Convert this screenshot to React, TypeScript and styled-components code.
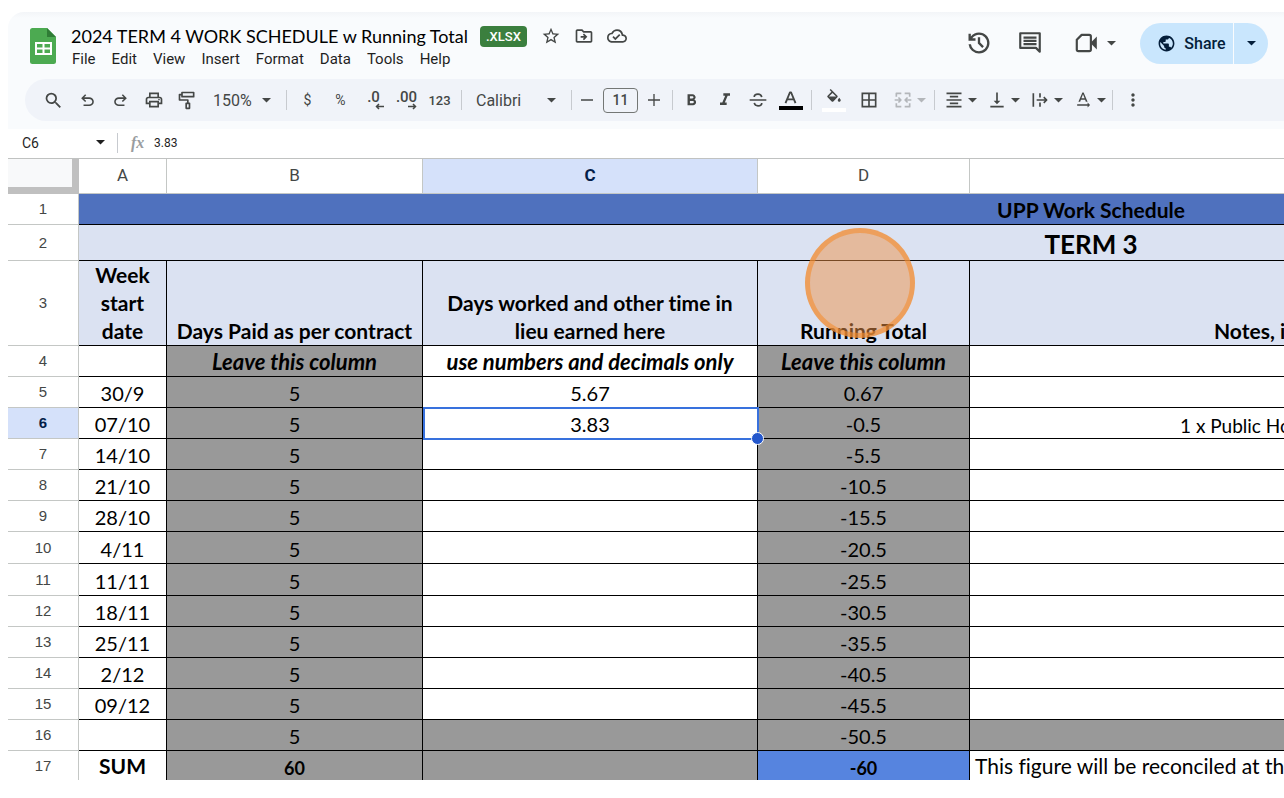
import React from "react";
import styled, { createGlobalStyle, css } from "styled-components";
import {
  MdBorderAll,
  MdFormatAlignCenter,
  MdFormatBold,
  MdFormatItalic,
  MdMoreVert,
  MdOutlineCloudDone,
  MdOutlineDriveFileMove,
  MdOutlineLocalPrintshop,
  MdPublic,
  MdSearch,
  MdStarBorder,
  MdTextRotationNone,
  MdVerticalAlignBottom,
} from "react-icons/md";

const UI_FONT = `Roboto, "Liberation Sans", sans-serif`;
const CELL_FONT = `Lato, "Liberation Sans", sans-serif`;
const INK = "#444746";

const GlobalStyle = createGlobalStyle`
  * { box-sizing: border-box; }
  body { margin: 0; background: #fff; overflow: hidden; font-family: ${UI_FONT}; }
  button, input, select { font: inherit; color: inherit; border: 0; padding: 0; margin: 0; background: none; outline: none; }
  button { cursor: pointer; }
  svg { display: block; flex: none; }
`;

const AppWindow = styled.main`
  position: relative;
  margin: 12px 0 0 8px;
  border-radius: 16px 0 0 16px;
  overflow: hidden;
  background: #fff;
`;

const Header = styled.header`
  background: linear-gradient(#f3f5f8, #f9fbfd 6px);
  padding-bottom: 8px;
`;

const TopRow = styled.div`
  display: flex;
  align-items: center;
  height: 67px;
  padding: 0 16px 0 22px;
`;

const DocInfo = styled.div`
  display: flex;
  flex-direction: column;
  gap: 1px;
  margin-left: 15px;
  padding-top: 2px;
`;

const TitleRow = styled.div`
  display: flex;
  align-items: center;
  height: 24px;
  color: ${INK};
`;

const DocTitle = styled.h1`
  margin: 0;
  font-family: ${CELL_FONT};
  font-size: 18px;
  line-height: 24px;
  font-weight: 400;
  color: #000;
  white-space: nowrap;
`;

const FormatBadge = styled.span`
  margin: 0 8px 0 12px;
  padding: 0 6px;
  border-radius: 4px;
  background: #3b7f3e;
  color: #fff;
  font-size: 13px;
  font-weight: 500;
  line-height: 21px;
`;

const TitleIcon = styled.button`
  display: flex;
  align-items: center;
  justify-content: center;
  width: 33px;
  height: 24px;
  font-size: 20px;
`;

const MenuBar = styled.nav`
  display: flex;
  gap: 16px;
  margin-left: 1px;
`;

const MenuItem = styled.button`
  font-size: 15px;
  line-height: 20px;
  color: #1f1f1f;
`;

const Actions = styled.div`
  display: flex;
  align-self: flex-start;
  align-items: center;
  height: 62px;
  margin-left: auto;
  color: ${INK};
`;

const ActionButton = styled.button<{ $w?: number; $gap?: number }>`
  display: flex;
  align-items: center;
  justify-content: center;
  gap: 8px;
  width: ${(p) => p.$w ?? 24}px;
  height: 40px;
  margin-right: ${(p) => p.$gap ?? 27}px;
`;

const SharePill = styled.div`
  display: flex;
  gap: 1px;
  height: 41px;
  border-radius: 21px;
  overflow: hidden;
  color: #041e3a;
`;

const ShareButton = styled.button<{ $caret?: boolean }>`
  display: flex;
  align-items: center;
  justify-content: center;
  gap: 8px;
  width: ${(p) => (p.$caret ? "34px" : "93px")};
  padding-left: ${(p) => (p.$caret ? "0" : "10px")};
  background: #c9e6fd;
  font-size: 16px;
  font-weight: 500;
`;

const Toolbar = styled.div`
  display: flex;
  align-items: center;
  height: 42px;
  margin-left: 17px;
  padding-left: 11px;
  border-radius: 21px 0 0 21px;
  background: #f0f3f9;
  color: ${INK};
  white-space: nowrap;
`;

const Tool = styled.button<{ $w?: number; $muted?: boolean; $strong?: boolean }>`
  display: flex;
  align-items: center;
  justify-content: center;
  gap: 4px;
  flex: none;
  width: ${(p) => p.$w ?? 33}px;
  height: 32px;
  font-size: ${(p) => (p.$strong ? "13px" : "14px")};
  font-weight: ${(p) => (p.$strong ? 500 : 400)};
  color: ${(p) => (p.$muted ? "#b3b6ba" : "inherit")};
`;

const DecimalTool = styled(Tool)`
  flex-direction: column;
  gap: 0;
  font-weight: 500;
  font-size: 15px;
  line-height: 14px;
  svg { margin: -1px 0 0 11px; }
`;

const ColorTool = styled(Tool)<{ $bar: string }>`
  flex-direction: column;
  gap: 1px;
  &::after {
    content: "";
    width: 24px;
    height: 4px;
    background: ${(p) => p.$bar};
  }
`;

const Separator = styled.span<{ $before?: number; $after?: number }>`
  flex: none;
  width: 1px;
  height: 20px;
  margin: 0 ${(p) => p.$after ?? 4}px 0 ${(p) => p.$before ?? 4}px;
  background: #c7cacf;
`;

const Dropdown = styled.label<{ $w: number }>`
  position: relative;
  flex: none;
  width: ${(p) => p.$w}px;
  select {
    width: 100%;
    height: 32px;
    padding-left: 10px;
    appearance: none;
    font-size: 16px;
  }
  svg {
    position: absolute;
    right: 11px;
    top: 14px;
    pointer-events: none;
  }
`;

const Stepper = styled.div`
  display: flex;
  align-items: center;
  gap: 5px;
  padding-right: 3px;
`;

const SizeInput = styled.input`
  width: 35px;
  height: 25px;
  border: 1px solid #747775;
  border-radius: 4px;
  text-align: center;
  font-size: 14px;
  font-weight: 500;
`;

const FormulaBar = styled.div`
  display: flex;
  align-items: center;
  height: 29px;
  padding: 0 0 2px 14px;
  color: #1f1f1f;
`;

const NameBox = styled.input`
  width: 74px;
  font-size: 14px;
`;

const FormulaInput = styled.input`
  flex: 1;
  min-width: 0;
  font-size: 12px;
`;

const FxMark = styled.span`
  width: 23px;
  font: italic 700 16px/20px "Liberation Serif", serif;
  color: #9a9d9f;
`;

const SheetViewport = styled.div`
  overflow: hidden;
  border-top: 1px solid #c0c2c1;
`;

const Sheet = styled.table`
  table-layout: fixed;
  width: 2096px;
  border-collapse: separate;
  border-spacing: 0;
  font-family: ${CELL_FONT};
  font-variant-ligatures: none;
  color: #000;
  tbody tr:last-child > * { border-bottom: 0; }
`;

const Corner = styled.td`
  padding: 0;
  background: #f8f9fa;
  border-right: 7px solid #c0c0c0;
  border-bottom: 7px solid #c0c0c0;
`;

const headerCell = css<{ $active?: boolean }>`
  border-right: 1px solid #c4c7c5;
  border-bottom: 1px solid #c4c7c5;
  font-weight: ${(p) => (p.$active ? 700 : 400)};
  color: ${(p) => (p.$active ? "#041e49" : INK)};
  background: ${(p) => (p.$active ? "#d5e1fa" : "#fff")};
`;

const ColumnHead = styled.th<{ $active?: boolean }>`
  ${headerCell}
  height: 35px;
  padding: 0 0 3px;
  font-family: ${UI_FONT};
  font-size: 17px;
  line-height: 20px;
`;

const RowHead = styled.th<{ $active?: boolean }>`
  ${headerCell}
  padding: 0;
  font-family: "Liberation Sans", Arial, sans-serif;
  font-size: 15px;
  line-height: 18px;
`;

type Fill = "white" | "title" | "pale" | "grey" | "blue";
const fills: Record<Fill, string> = {
  white: "#fff",
  title: "#4f71be",
  pale: "#dbe2f2",
  grey: "#999999",
  blue: "#5684df",
};

const lineHeightFor = (size = 20) => (size < 20 ? 24 : size > 24 ? 32 : 28);

const Cell = styled.td<{
  $fill?: Fill;
  $bold?: boolean;
  $italic?: boolean;
  $size?: number;
  $indent?: number;
}>`
  position: relative;
  padding: 0 8px 0 ${(p) => p.$indent ?? 8}px;
  vertical-align: bottom;
  text-align: ${(p) => (p.$indent ? "left" : "center")};
  white-space: ${(p) => (p.$indent ? "nowrap" : "normal")};
  border-right: 1px solid #000;
  border-bottom: 1px solid #000;
  background: ${(p) => fills[p.$fill ?? "white"]};
  font-size: ${(p) => p.$size ?? (p.$italic ? 22 : p.$bold ? 21 : 20)}px;
  line-height: ${(p) => lineHeightFor(p.$size)}px;
  font-weight: ${(p) => (p.$bold ? 700 : 400)};
  font-style: ${(p) => (p.$italic ? "italic" : "normal")};
`;

const Row = styled.tr<{ $h: number }>`
  height: ${(p) => p.$h}px;
`;

const Selection = styled.span`
  position: absolute;
  z-index: 1;
  inset: -1px -2px -2px 0;
  border: 2px solid #3871dd;
  &::after {
    content: "";
    position: absolute;
    right: -7px;
    bottom: -7px;
    width: 11px;
    height: 11px;
    border: 1px solid #fff;
    border-radius: 50%;
    background: #2457cc;
  }
`;

const ClickMarker = styled.span`
  position: absolute;
  z-index: 2;
  left: 797px;
  top: 216px;
  width: 110px;
  height: 110px;
  border: 5px solid rgba(243, 142, 48, 0.6);
  border-radius: 50%;
  background: rgba(237, 146, 72, 0.5);
  pointer-events: none;
`;

const Caret = () => (
  <svg width="9" height="5" viewBox="0 0 9 5" fill="currentColor" aria-hidden>
    <path d="M0 0h9L4.500 4.600z" />
  </svg>
);

const Glyph = ({ d, size = 20 }: { d: string; size?: number }) => (
  <svg width={size} height={size} viewBox="0 0 24 24" fill="currentColor" aria-hidden>
    <path d={d} />
  </svg>
);

const Strokes = ({ d, size = 20, width = 2, solid }: { d: string; size?: number; width?: number; solid?: string }) => (
  <svg width={size} height={size} viewBox="0 0 24 24" fill="none" stroke="currentColor" strokeWidth={width} strokeLinejoin="round" aria-hidden>
    <path d={d} />
    {solid && <path d={solid} fill="currentColor" stroke="none" />}
  </svg>
);

const SheetsLogo = () => (
  <svg width="26" height="36" viewBox="0 0 26 36" aria-label="Sheets">
    <path d="M2.500 0H17l9 9v24.500a2.500 2.500 0 0 1-2.500 2.500h-21A2.500 2.500 0 0 1 0 33.500v-31A2.500 2.500 0 0 1 2.500 0z" fill="#4caa51" />
    <path d="M17 0l9 9h-9z" fill="#2f7d36" />
    <path d="M5 14h17v13H5z" fill="#fff" />
    <path d="M7 16h5.500v3.500H7zM14.500 16H20v3.500h-5.500zM7 21.500h5.500V25H7zM14.500 21.500H20V25h-5.500z" fill="#4caa51" />
  </svg>
);

const UNDO = "M7 19v-2h7.100q1.575 0 2.737-1Q18 15 18 13.500T16.837 11Q15.675 10 14.100 10H7.800l2.600 2.600L9 14 4 9l5-5 1.400 1.400L7.800 8h6.300q2.425 0 4.163 1.575T20 13.500t-1.737 3.925T14.100 19z";
const REDO = "M9.900 19q-2.425 0-4.162-1.575T4 13.500t1.738-3.925T9.900 8h6.300l-2.600-2.600L15 4l5 5-5 5-1.400-1.400 2.600-2.600H9.900q-1.575 0-2.737 1Q6 12 6 13.500T7.163 16Q8.325 17 9.900 17H17v2z";
const HISTORY = "M12 21q-3.450 0-6.013-2.288T3.050 13H5.100q.35 2.600 2.313 4.300T12 19q2.925 0 4.963-2.037T19 12t-2.037-4.962T12 5q-1.725 0-3.225.8T6.250 8H9v2H3V4h2v2.350q1.275-1.600 3.113-2.475T12 3q1.875 0 3.513.713t2.850 1.924 1.925 2.850T21 12t-.712 3.513-1.925 2.850-2.850 1.925T12 21m2.800-4.800L11 12.400V7h2v4.600l3.200 3.200z";
const BUCKET = "M16.560 8.940 7.620 0 6.210 1.410l2.380 2.380-5.150 5.150a1.490 1.490 0 0 0 0 2.120l5.500 5.500c.29.29.68.44 1.060.44s.77-.15 1.060-.44l5.500-5.500c.59-.58.59-1.530 0-2.120zM5.210 10 10 5.210 14.790 10H5.210zM19 11.500s-2 2.170-2 3.500c0 1.100.9 2 2 2s2-.9 2-2c0-1.330-2-3.500-2-3.500z";

const weeks: [number, string, string, string, number][] = [
  [5, "30/9", "5.67", "0.67", 31],
  [6, "07/10", "3.83", "-0.5", 31],
  [7, "14/10", "", "-5.5", 31],
  [8, "21/10", "", "-10.5", 31],
  [9, "28/10", "", "-15.5", 31],
  [10, "4/11", "", "-20.5", 32],
  [11, "11/11", "", "-25.5", 32],
  [12, "18/11", "", "-30.5", 31],
  [13, "25/11", "", "-35.5", 31],
  [14, "2/12", "", "-40.5", 31],
  [15, "09/12", "", "-45.5", 31],
];

const menus = ["File", "Edit", "View", "Insert", "Format", "Data", "Tools", "Help"];

export default function App() {
  return (
    <>
      <GlobalStyle />
      <AppWindow>
        <Header>
          <TopRow>
            <SheetsLogo />
            <DocInfo>
              <TitleRow>
                <DocTitle>2024 TERM 4 WORK SCHEDULE w Running Total</DocTitle>
                <FormatBadge>.XLSX</FormatBadge>
                <TitleIcon aria-label="Star"><MdStarBorder /></TitleIcon>
                <TitleIcon aria-label="Move"><MdOutlineDriveFileMove /></TitleIcon>
                <TitleIcon aria-label="Saved"><MdOutlineCloudDone /></TitleIcon>
              </TitleRow>
              <MenuBar>
                {menus.map((m) => <MenuItem key={m}>{m}</MenuItem>)}
              </MenuBar>
            </DocInfo>
            <Actions>
              <ActionButton aria-label="Version history"><Glyph d={HISTORY} size={28} /></ActionButton>
              <ActionButton $gap={31} aria-label="Comments">
                <Strokes size={26} d="M3 3h18v17l-3.500-3.500H3zM6 7h12M6 10h12M6 13h12" />
              </ActionButton>
              <ActionButton $w={43} $gap={24} aria-label="Meet">
                <Strokes size={26} d="M8 4.500h7a1.500 1.500 0 0 1 1.500 1.500v12a1.500 1.500 0 0 1-1.500 1.500H5A1.500 1.500 0 0 1 3.500 18V9z" solid="M17 11l5-5v12l-5-5z" />
                <Caret />
              </ActionButton>
              <SharePill>
                <ShareButton><MdPublic size={19} />Share</ShareButton>
                <ShareButton $caret aria-label="Share options"><Caret /></ShareButton>
              </SharePill>
            </Actions>
          </TopRow>
          <Toolbar>
            <Tool $w={35} aria-label="Search menus"><MdSearch size={21} /></Tool>
            <Tool aria-label="Undo"><Glyph d={UNDO} size={19} /></Tool>
            <Tool aria-label="Redo"><Glyph d={REDO} size={19} /></Tool>
            <Tool aria-label="Print"><MdOutlineLocalPrintshop size={20} /></Tool>
            <Tool aria-label="Paint format">
              <Strokes d="M6 3h14v5H6zM6 5.500H3V12h10v4M11 16h4v6h-4z" />
            </Tool>
            <Dropdown $w={79}>
              <select aria-label="Zoom"><option>150%</option></select>
              <Caret />
            </Dropdown>
            <Separator />
            <Tool>$</Tool>
            <Tool>%</Tool>
            <DecimalTool aria-label="Decrease decimal places">
              .0
              <svg width="9" height="7" viewBox="0 0 9 7" fill="none" stroke="currentColor" strokeWidth="1.500"><path d="M9 3.500H1.500M4 1 1.500 3.500 4 6" /></svg>
            </DecimalTool>
            <DecimalTool aria-label="Increase decimal places">
              .00
              <svg width="9" height="7" viewBox="0 0 9 7" fill="none" stroke="currentColor" strokeWidth="1.500"><path d="M0 3.500h7.500M5 1l2.500 2.500L5 6" /></svg>
            </DecimalTool>
            <Tool $strong>123</Tool>
            <Separator $before={5} />
            <Dropdown $w={101}>
              <select aria-label="Font"><option>Calibri</option></select>
              <Caret />
            </Dropdown>
            <Separator />
            <Stepper>
              <Tool $w={22} aria-label="Decrease font size"><Strokes size={16} d="M3 12h18" /></Tool>
              <SizeInput aria-label="Font size" defaultValue="11" />
              <Tool $w={22} aria-label="Increase font size"><Strokes size={16} d="M3 12h18M12 3v18" /></Tool>
            </Stepper>
            <Separator $after={2} />
            <Tool aria-label="Bold"><MdFormatBold size={19} /></Tool>
            <Tool aria-label="Italic"><MdFormatItalic size={20} /></Tool>
            <Tool aria-label="Strikethrough">
              <Strokes d="M2 12h20M16.500 8.500C16 6.200 14.300 5 12 5S7.500 6.200 7.500 8.500M7.500 15.500c.5 2.300 2.200 3.500 4.500 3.500s4.500-1.200 4.500-3.500" />
            </Tool>
            <ColorTool $bar="#000" aria-label="Text colour">
              <Strokes size={15} width={3} d="M4 21 11 4h2l7 17M7 15h10" />
            </ColorTool>
            <Separator />
            <ColorTool $w={36} $bar="#fff" aria-label="Fill colour"><Glyph d={BUCKET} size={18} /></ColorTool>
            <Tool aria-label="Borders"><MdBorderAll size={20} /></Tool>
            <Tool $muted $w={48} aria-label="Merge cells">
              <Strokes d="M10 4H4v4M4 16v4h6M14 4h6v4M20 16v4h-6M2 12h7M6.500 9l3 3-3 3M22 12h-7M17.500 9l-3 3 3 3" />
              <Caret />
            </Tool>
            <Separator $before={1} />
            <Tool $w={43} aria-label="Horizontal align"><MdFormatAlignCenter size={20} /><Caret /></Tool>
            <Tool $w={43} aria-label="Vertical align"><MdVerticalAlignBottom size={20} /><Caret /></Tool>
            <Tool $w={43} aria-label="Text wrapping">
              <Strokes d="M4 4v16M12 4v5M12 15v5M8 12h12M16.500 8.500 20 12l-3.500 3.500" />
              <Caret />
            </Tool>
            <Tool $w={43} aria-label="Text rotation"><MdTextRotationNone size={20} /><Caret /></Tool>
            <Separator $before={1} $after={3} />
            <Tool aria-label="More"><MdMoreVert size={20} /></Tool>
          </Toolbar>
        </Header>
        <FormulaBar>
          <NameBox aria-label="Name box" defaultValue="C6" />
          <Caret />
          <Separator $before={12} $after={13} />
          <FxMark>fx</FxMark>
          <FormulaInput aria-label="Formula" defaultValue="3.83" />
        </FormulaBar>
        <SheetViewport>
          <Sheet>
            <colgroup>
              <col style={{ width: 71 }} />
              <col style={{ width: 88 }} />
              <col style={{ width: 256 }} />
              <col style={{ width: 335 }} />
              <col style={{ width: 212 }} />
              <col />
            </colgroup>
            <thead>
              <tr>
                <Corner />
                <ColumnHead scope="col">A</ColumnHead>
                <ColumnHead scope="col">B</ColumnHead>
                <ColumnHead scope="col" $active>C</ColumnHead>
                <ColumnHead scope="col">D</ColumnHead>
                <ColumnHead />
              </tr>
            </thead>
            <tbody>
              <Row $h={31}>
                <RowHead scope="row">1</RowHead>
                <Cell colSpan={5} $fill="title" $bold>UPP Work Schedule</Cell>
              </Row>
              <Row $h={36}>
                <RowHead scope="row">2</RowHead>
                <Cell colSpan={5} $fill="pale" $bold $size={26}>TERM 3</Cell>
              </Row>
              <Row $h={85}>
                <RowHead scope="row">3</RowHead>
                <Cell $fill="pale" $bold>Week start date</Cell>
                <Cell $fill="pale" $bold>Days Paid as per contract</Cell>
                <Cell $fill="pale" $bold>Days worked and other time in lieu earned here</Cell>
                <Cell $fill="pale" $bold>Running Total</Cell>
                <Cell $fill="pale" $bold $indent={244}>Notes, i</Cell>
              </Row>
              <Row $h={31}>
                <RowHead scope="row">4</RowHead>
                <Cell />
                <Cell $fill="grey" $bold $italic>Leave this column</Cell>
                <Cell $bold $italic>use numbers and decimals only</Cell>
                <Cell $fill="grey" $bold $italic>Leave this column</Cell>
                <Cell />
              </Row>
              {weeks.map(([n, date, worked, total, h]) => (
                <Row key={n} $h={h}>
                  <RowHead scope="row" $active={n === 6}>{n}</RowHead>
                  <Cell>{date}</Cell>
                  <Cell $fill="grey">5</Cell>
                  <Cell>
                    {worked}
                    {n === 6 && <Selection />}
                  </Cell>
                  <Cell $fill="grey">{total}</Cell>
                  {n === 6 ? <Cell $indent={210} $size={19}>1 x Public Ho</Cell> : <Cell />}
                </Row>
              ))}
              <Row $h={31}>
                <RowHead scope="row">16</RowHead>
                <Cell />
                <Cell $fill="grey">5</Cell>
                <Cell $fill="grey" />
                <Cell $fill="grey">-50.5</Cell>
                <Cell $fill="grey" />
              </Row>
              <Row $h={29}>
                <RowHead scope="row">17</RowHead>
                <Cell $bold>SUM</Cell>
                <Cell $fill="grey" $bold $size={18}>60</Cell>
                <Cell $fill="grey" />
                <Cell $fill="blue" $bold $size={18}>-60</Cell>
                <Cell $indent={5} $size={21}>This figure will be reconciled at th</Cell>
              </Row>
            </tbody>
          </Sheet>
        </SheetViewport>
        <ClickMarker />
      </AppWindow>
    </>
  );
}
